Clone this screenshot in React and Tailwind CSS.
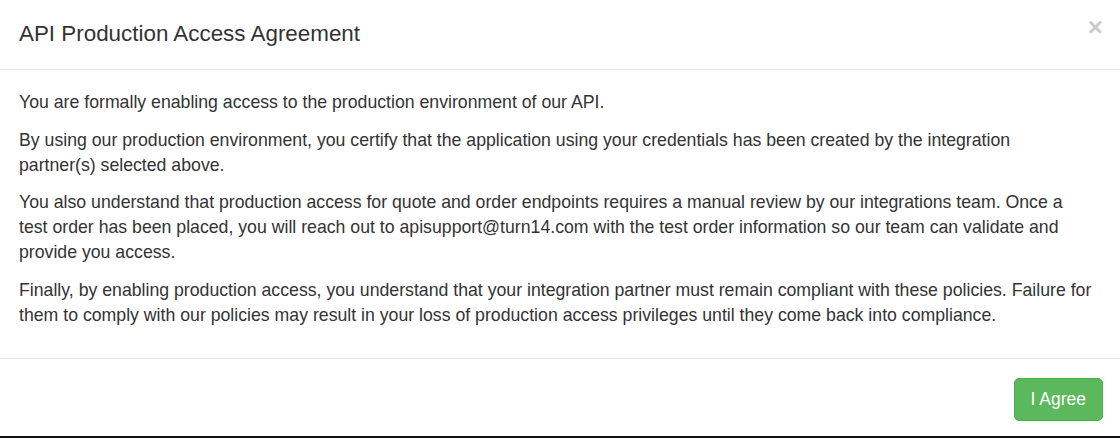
export default function App() {
  return (
    <div className="min-h-[438px] bg-white flex flex-col font-['Liberation_Sans',Arial,sans-serif] text-[#333]">
      {/* Header */}
      <div className="flex items-start justify-between px-[19px] pt-[18px] pb-[19px] border-b border-[#e5e5e5]">
        <h4 className="text-[22.4px] leading-[32px] font-normal m-0">API Production Access Agreement</h4>
        <button className="text-[26px] leading-[26px] font-bold text-black opacity-20 -mt-[4px] -mr-[2px]">
          ×
        </button>
      </div>

      {/* Body */}
      <div className="px-[19px] pt-[20px] pb-[6.5px] text-[17.7px] leading-[25px]">
        <p className="mb-[12.5px]">You are formally enabling access to the production environment of our API.</p>
        <p className="mb-[12.5px]">
          By using our production environment, you certify that the application using your credentials has been
          created by the integration
          <br />
          partner(s) selected above.
        </p>
        <p className="mb-[12.5px]">
          You also understand that production access for quote and order endpoints requires a manual review by our
          integrations team. Once a
          <br />
          test order has been placed, you will reach out to apisupport@turn14.com with the test order information so
          our team can validate and
          <br />
          provide you access.
        </p>
        <p className="mb-[12.5px]">
          Finally, by enabling production access, you understand that your integration partner must remain compliant
          with these policies. Failure for them to comply with our policies may result in your loss of production
          access privileges until they come back into compliance.
        </p>
      </div>

      {/* Footer */}
      <div className="flex justify-end mt-[11.5px] px-[17px] pt-[19px] pb-[15px] border-t border-[#e5e5e5]">
        <button className="bg-[#5cb85c] border border-[#4cae4c] text-white text-[17.5px] leading-[25px] px-[16px] py-[8px] rounded-[5px]">
          I Agree
        </button>
      </div>
      <div className="h-[2px] bg-[#111] mt-auto" />
    </div>
  );
}
